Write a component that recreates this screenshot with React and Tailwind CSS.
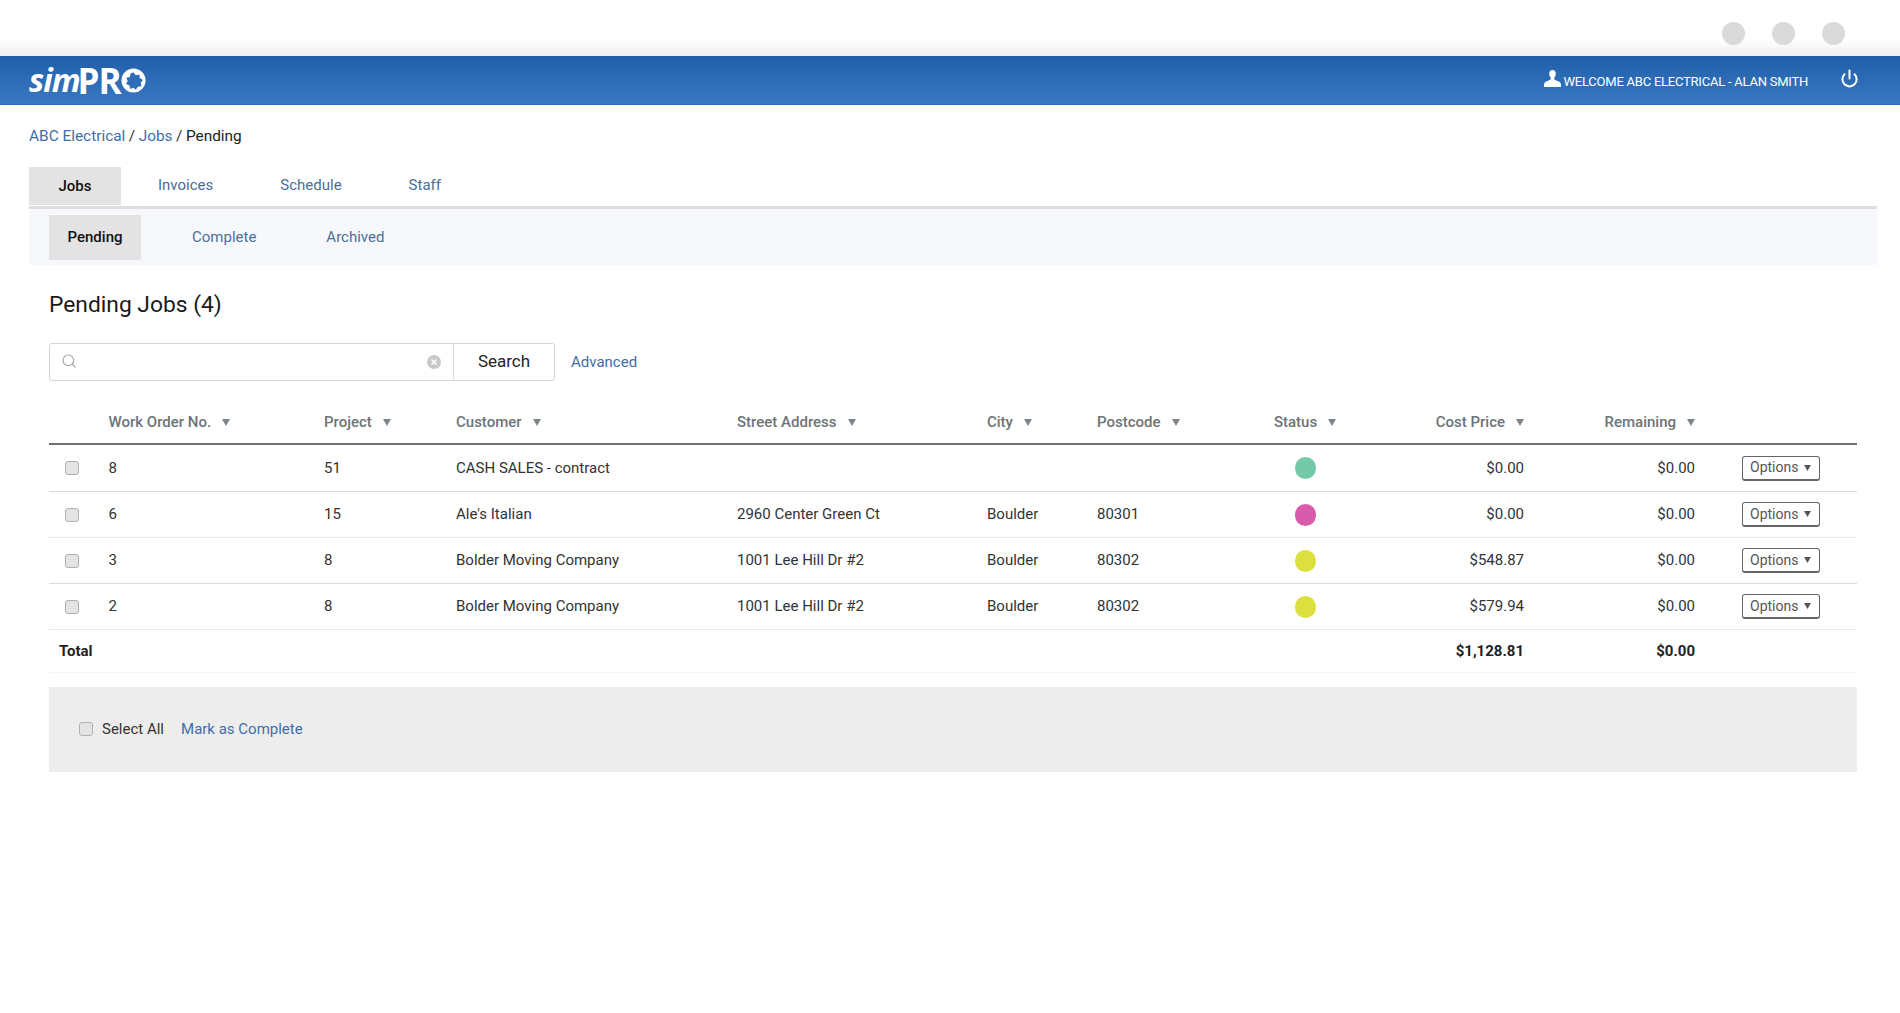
import { Power, Search } from "lucide-react";

const cols = "grid grid-cols-[59.5px_215.5px_132px_281px_250px_110px_160px_96px_171px_171px_162px] items-center";

const jobs = [
  { no: "8", project: "51", customer: "CASH SALES - contract", street: "", city: "", postcode: "", status: "bg-[#74c9a9]", cost: "$0.00", row: "h-[47px] border-[#dcdcdc]" },
  { no: "6", project: "15", customer: "Ale's Italian", street: "2960 Center Green Ct", city: "Boulder", postcode: "80301", status: "bg-[#d95bab]", cost: "$0.00", row: "h-[46px] border-[#e8e8e8]" },
  { no: "3", project: "8", customer: "Bolder Moving Company", street: "1001 Lee Hill Dr #2", city: "Boulder", postcode: "80302", status: "bg-[#dcdf3e]", cost: "$548.87", row: "h-[46px] border-[#dcdcdc]" },
  { no: "2", project: "8", customer: "Bolder Moving Company", street: "1001 Lee Hill Dr #2", city: "Boulder", postcode: "80302", status: "bg-[#dcdf3e]", cost: "$579.94", row: "h-[46px] border-[#e8e8e8]" },
];

const Caret = ({ className }) => (
  <svg viewBox="0 0 8 7" className={className}>
    <path d="M0 0h8L4 7z" fill="currentColor" />
  </svg>
);

const Heading = ({ label, right, center }) => (
  <div className={`flex items-center gap-[11px] ${right ? "justify-end" : ""} ${center ? "justify-center" : ""}`}>
    <span>{label}</span>
    <Caret className="w-[8px] h-[7px] text-[#7d8488]" />
  </div>
);

const Checkbox = ({ className = "" }) => (
  <div className={`w-[14px] h-[14px] rounded-[3px] border border-[#b0b0b0] bg-[#e4e4e4] ${className}`}></div>
);

const Logo = () => (
  <div className="flex items-center text-white select-none">
    <span className="font-['Open_Sans'] italic font-bold text-[32px] leading-none tracking-[-1px]">sim</span>
    <span className="font-['Open_Sans'] font-bold text-[35px] leading-none ml-[-2px] tracking-[-1px]">PR</span>
    <svg viewBox="0 0 28 28" className="w-[25px] h-[25px]">
      <circle cx="14" cy="14" r="13.5" fill="#fff" />
      <path d="M14 5l2.500 3.200 4-1 .6 4 3.400 2.300-2.400 3 .8 4-4 .5-2.400 3.300-2.500-2.300-3.500 1.500-1-4-3.800-1.500 1.800-3.500-1.500-3.700 4-.8.800-4z" fill="#2f6db8" />
      <circle cx="14" cy="14" r="3" fill="#2f6db8" />
    </svg>
  </div>
);

const App = () => {
  return (
    <div className="w-full h-[1013px] bg-white font-['Roboto',sans-serif] text-[15px] overflow-hidden">
      {/* WINDOW DOTS */}
      <div className="h-[56px] pr-[55px] pt-[11px] flex justify-end items-center gap-[27px] bg-gradient-to-b from-white from-70% to-[#efefef]">
        <div className="w-[23px] h-[23px] rounded-full bg-[#dadadb]"></div>
        <div className="w-[23px] h-[23px] rounded-full bg-[#dadadb]"></div>
        <div className="w-[23px] h-[23px] rounded-full bg-[#dadadb]"></div>
      </div>

      {/* HEADER */}
      <div className="h-[49px] pl-[29px] pr-[41px] flex justify-between items-center bg-gradient-to-b from-[#1f5ea9] to-[#3a79c1] border-b border-[#2a6db7]">
        <Logo />
        <div className="flex items-center text-white">
          <svg viewBox="0 0 18 18" className="w-[17px] h-[17px] mb-[3px] mr-[3px]">
            <path d="M9 0c2.300 0 3.500 1.700 3.500 4 0 1.800-.8 3.300-1.700 4.200v1.300c0 1 4.200 2 6.200 3.500.7.600 1 2 1 5H0c0-3 .3-4.400 1-5 2-1.500 6.200-2.500 6.200-3.500V8.200C6.300 7.300 5.500 5.800 5.500 4 5.500 1.700 6.700 0 9 0z" fill="currentColor" />
          </svg>
          <span className="text-[13px] tracking-[-0.23px] mt-[3px] mr-[32px]">WELCOME ABC ELECTRICAL - ALAN SMITH</span>
          <Power size={19} strokeWidth={2.5} className="mb-[3px]" />
        </div>
      </div>

      <div className="ml-[29px] w-[1848px]">
        {/* BREADCRUMB */}
        <div className="h-[62px] pt-[1px] flex items-center gap-[3.5px] text-[15.4px] text-[#333]">
          <span className="text-[#3f6ea8]">ABC Electrical</span>
          <span>/</span>
          <span className="text-[#3f6ea8]">Jobs</span>
          <span>/</span>
          <span className="text-[#222]">Pending</span>
        </div>

        {/* TABS */}
        <div className="h-[39px] flex items-start text-[#4a6d94]">
          <div className="w-[92px] h-[38px] flex justify-center items-center bg-[#e3e3e3] text-[#111] font-medium">Jobs</div>
          <div className="h-[37px] flex items-center gap-[67px] ml-[37px]">
            <span>Invoices</span>
            <span>Schedule</span>
            <span>Staff</span>
          </div>
        </div>
        <div className="h-[59px] pt-[6px] pl-[20px] flex items-start border-t-[3px] border-[#dedede] bg-[#f6f8fb] text-[#4a70a0]">
          <div className="w-[92px] h-[45px] flex justify-center items-center bg-[#e3e3e3] text-[#111] font-medium">Pending</div>
          <div className="h-[45px] flex items-center gap-[70px] ml-[51px]">
            <span>Complete</span>
            <span>Archived</span>
          </div>
        </div>

        <div className="pl-[20px] pr-[20px]">
          <h1 className="mt-[24px] h-[33px] flex items-center text-[22.8px] text-[#1a1a1a]">Pending Jobs (4)</h1>

          {/* SEARCH */}
          <div className="mt-[21px] flex items-center">
            <div className="w-[506px] h-[38px] flex items-center rounded-[3px] border border-[#d4d4d4]">
              <div className="flex-1 pl-[11px] pr-[12px] flex justify-between items-center">
                <Search size={16} strokeWidth={1.8} className="text-[#a8a8a8] mb-[2px]" />
                <svg viewBox="0 0 14 14" className="w-[14px] h-[14px]">
                  <circle cx="7" cy="7" r="7" fill="#c9c9c9" />
                  <path d="M4.500 4.500l5 5m0-5l-5 5" stroke="#fff" strokeWidth="1.500" />
                </svg>
              </div>
              <div className="w-[101px] h-full flex justify-center items-center border-l border-[#dcdcdc] text-[17px] text-[#222]">Search</div>
            </div>
            <span className="ml-[16px] mt-[1px] text-[#3f6ea8]">Advanced</span>
          </div>

          {/* TABLE */}
          <div className="mt-[24px]">
            <div className={`${cols} h-[40px] pb-[3px] border-b-2 border-[#6f6f6f] font-medium text-[#6d7478]`}>
              <div></div>
              <Heading label="Work Order No." />
              <Heading label="Project" />
              <Heading label="Customer" />
              <Heading label="Street Address" />
              <Heading label="City" />
              <Heading label="Postcode" />
              <Heading label="Status" center />
              <Heading label="Cost Price" right />
              <Heading label="Remaining" right />
              <div></div>
            </div>
            {jobs.map((job) => (
              <div key={job.no} className={`${cols} border-b ${job.row} text-[#333]`}>
                <div className="pl-[16px]"><Checkbox /></div>
                <div>{job.no}</div>
                <div>{job.project}</div>
                <div>{job.customer}</div>
                <div>{job.street}</div>
                <div>{job.city}</div>
                <div>{job.postcode}</div>
                <div className="flex justify-center">
                  <div className={`w-[21px] h-[22px] rounded-full ${job.status}`}></div>
                </div>
                <div className="text-right">{job.cost}</div>
                <div className="text-right">$0.00</div>
                <div className="pl-[47px]">
                  <div className="w-[78px] h-[25px] pl-[7px] pr-[8px] flex justify-between items-center rounded-[3px] border border-[#666] border-b-2 text-[14px] text-[#555]">
                    <span>Options</span>
                    <Caret className="w-[7px] h-[6px]" />
                  </div>
                </div>
              </div>
            ))}
            <div className={`${cols} h-[43px] border-b border-[#f6f6f6] font-bold text-[#222]`}>
              <div className="col-span-8 pl-[10px]">Total</div>
              <div className="text-right">$1,128.81</div>
              <div className="text-right">$0.00</div>
            </div>
          </div>

          {/* SELECT ALL */}
          <div className="mt-[14px] h-[85px] pl-[30px] flex items-center bg-[#ededed] text-[#333]">
            <Checkbox className="mb-[2px]" />
            <span className="ml-[9px]">Select All</span>
            <span className="ml-[17px] text-[#3f6ea8]">Mark as Complete</span>
          </div>
        </div>
      </div>
    </div>
  );
};

export default App;
